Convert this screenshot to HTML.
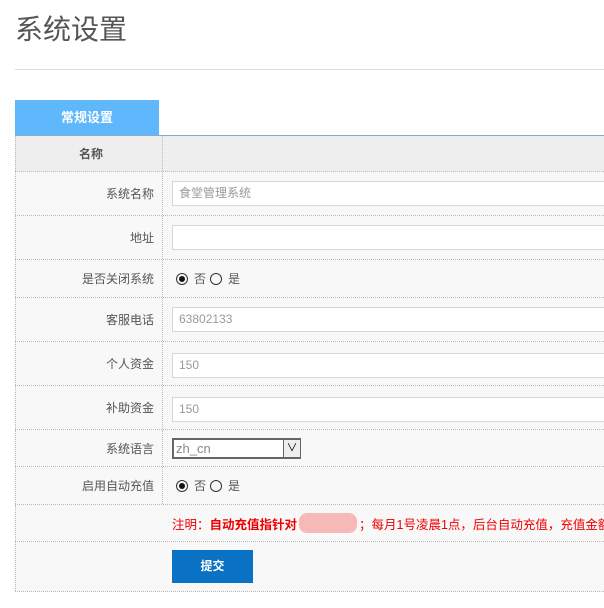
<!DOCTYPE html>
<html><head><meta charset="utf-8"><style>
*{margin:0;padding:0;box-sizing:border-box}
body{width:604px;height:608px;overflow:hidden;background:#fff;font-family:"Liberation Sans","Noto Sans CJK SC",sans-serif;font-size:12px;color:#555;position:relative}
.t{position:absolute;left:15px;top:12px;font-size:28px;color:#555;line-height:36px}
.hr{position:absolute;left:15px;right:0;top:69px;border-top:1px solid #ddd}
.tab{position:absolute;left:15px;top:100px;width:144px;height:35px;background:#5fb8fb;color:#fff;font-weight:bold;font-size:13px;text-align:center;line-height:35px}
.bl{position:absolute;left:15px;right:0;top:135px;border-top:1px solid #8ac;}
.r{position:absolute;left:15px;right:0;background:#f8f8f8;border-bottom:1px dotted #bbb}
.l{position:absolute;left:0;width:148px;top:0;bottom:0;border-left:1px dotted #bbb;border-right:1px dotted #bbb;text-align:right;padding-right:8px;display:flex;align-items:center;justify-content:flex-end}
.v{position:absolute;left:157px;right:-60px;top:0;bottom:0;display:flex;align-items:center}
.in{width:470px;height:25px;border:1px solid #d5d5d5;background:#fff;color:#999;padding-left:6px;line-height:23px}
.rad{display:inline-block;width:12px;height:12px;border:1px solid #333;border-radius:50%;position:relative;vertical-align:-2px;margin:0 6px 0 4px}
.rad.on:after{content:"";position:absolute;left:2px;top:2px;width:6px;height:6px;border-radius:50%;background:#111}
</style></head><body>
<div class="t">系统设置</div><div class="hr"></div>
<div class="tab">常规设置</div><div class="bl"></div>
<div class="r" style="top:136px;height:36px;background:#eee"><div class="l" style="justify-content:flex-start;padding:0 0 0 63px;font-weight:bold">名称</div></div>
<div class="r" style="top:172px;height:44px"><div class="l">系统名称</div><div class="v"><div class="in">食堂管理系统</div></div></div>
<div class="r" style="top:216px;height:44px"><div class="l">地址</div><div class="v"><div class="in"></div></div></div>
<div class="r" style="top:260px;height:38px"><div class="l">是否关闭系统</div><div class="v"><span class="rad on"></span>否<span class="rad"></span>是</div></div>
<div class="r" style="top:298px;height:44px"><div class="l">客服电话</div><div class="v"><div class="in">63802133</div></div></div>
<div class="r" style="top:342px;height:44px"><div class="l">个人资金</div><div class="v"><div class="in" style="margin-top:4px">150</div></div></div>
<div class="r" style="top:386px;height:44px"><div class="l">补助资金</div><div class="v"><div class="in" style="margin-top:4px">150</div></div></div>
<div class="r" style="top:430px;height:37px"><div class="l">系统语言</div><div class="v"><div style="width:129px;height:21px;border:2px solid #666;border-right:1px solid #666;background:#fff;position:relative;color:#888;font-size:13px;padding-left:2px;line-height:17px">zh_cn<div style="position:absolute;right:0;top:0;width:17px;height:17px;border-left:1px solid #666;background:#eee;text-align:center;color:#000;font-size:11px;line-height:17px">&#8744;</div></div></div></div>
<div class="r" style="top:467px;height:38px"><div class="l">启用自动充值</div><div class="v"><span class="rad on"></span>否<span class="rad"></span>是</div></div>
<div class="r" style="top:505px;height:37px"><div class="l" style="border-right:none"></div><div class="v" style="color:#e00;white-space:nowrap;overflow:hidden;font-size:12.5px">注明：<b>自动充值指针对</b><span style="display:inline-block;width:58px;height:20px;background:#f7b8b8;border-radius:8px;margin:0 2px"></span>；每月1号凌晨1点，后台自动充值，充值金额为</div></div>
<div class="r" style="top:542px;height:50px"><div class="l" style="border-right:none"></div><div class="v"><div style="width:81px;height:33px;background:#0a72c4;color:#fff;font-weight:bold;text-align:center;line-height:33px">提交</div></div></div>
</body></html>
